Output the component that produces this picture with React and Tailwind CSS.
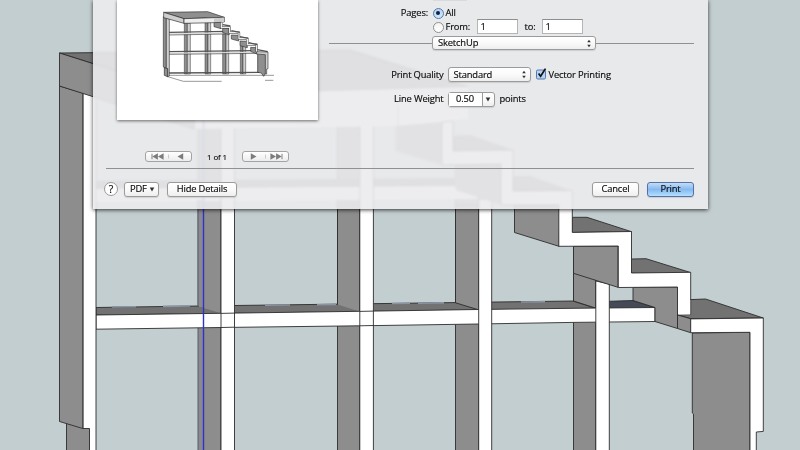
import React from 'react';

const DARK = '#8d8d8d';
const TOP = '#727272';

function Poly({ p, f = '#fff', s = '#2c2c2c', w = 0.9 }) {
  return <polygon points={p} fill={f} stroke={s} strokeWidth={w} />;
}

function Line({ d, s = '#2c2c2c', w = 0.9 }) {
  return <path d={d} fill="none" stroke={s} strokeWidth={w} />;
}

function ShelfModel() {
  return (
    <svg width="800" height="450" viewBox="0 0 800 450" className="block">
      {/* uprights, side faces */}
      <Poly p="198.5,110 221,110 221,460 198.5,460" f={DARK} s="none" />
      <rect x="197.4" y="110" width="1.6" height="350" fill="#6f7378" />
      <rect x="199" y="110" width="4" height="350" fill="#8a8892" />
      <Poly p="337.5,110 359.5,110 359.5,460 337.5,460" f={DARK} />
      <Poly p="455.5,165 478.5,165 478.5,460 455.5,460" f={DARK} />
      <Poly p="573.5,246 595.5,246 595.5,460 573.5,460" f={DARK} />

      {/* upper shelf */}
      <Poly p="96,181 455,178 478,186 96,189" f={TOP} s="none" />
      <Poly p="96,189 478,186 478,199 96,202" s="none" />

      {/* lower shelf */}
      <Poly p="96,307.5 198,306 573,301 595,308 654.5,307.5 220,313.5 96,315" f={TOP} />
      <Poly p="609,301.3 633,300.5 655,307.5 609,308" f="#454958" />
      <Line d="M112 306.9L136 306.7M163 306.4L190 306M265 305.2L290 305M317 304.7L336 304.5M392 303.5L410 303.3M418 303.2L444 302.9M521 302L545 301.7" s="#8a94a2" w={1.6} />
      <Poly p="203,211 221,211 221,313.3 203,307.8" f={DARK} s="none" />
      <Poly p="337.5,205 359.5,205 359.5,311.4 337.5,304.5" f={DARK} s="none" />
      <Poly p="455.5,205 478.5,205 478.5,309.8 455.5,302.8" f={DARK} />
      <Line d="M337.5 200V304.5M221 200V460M359.5 200V311" />
      <rect x="197.4" y="200" width="1.6" height="106" fill="#6f7378" />
      <rect x="199" y="200" width="4" height="107" fill="#8a8892" />
      <Poly p="573.5,260 595.5,260 595.5,308 573.5,301" f={DARK} />
      <Poly p="96,315 221,313.3 360,311.3 478,309.5 573,308.3 655,307.5 655,321.5 573,322.4 478,324 360,325.8 221,327.5 96,329.2" />

      {/* uprights, front edges */}
      <Poly p="221,125 234.5,125 234.5,460 221,460" />
      <Poly p="359.8,125 373.4,125 373.4,460 359.8,460" />
      <Line d="M221 313.4L234.5 313.1M221 327.5L234.5 327.2M359.8 311.4L373.4 311.1M359.8 325.8L373.4 325.5" />
      <Poly p="478.7,199 491.7,199 491.7,460 478.7,460" />
      <Poly p="595.8,281 609.3,284 609.3,460 595.8,460" />

      {/* left side panel */}
      <Poly p="66.5,420 89.5,428 89.5,460 66.5,460" f={DARK} />
      <Poly p="83,90 96,94 96,460 89.5,460 89.5,428.5 83,428.5" />
      <Poly p="59.5,86 82.8,93 82.8,428.5 59.5,421.5" f={DARK} />

      {/* slab */}
      <Poly p="59.5,53 350,50 468,87 195,96" f={TOP} />
      <Poly p="59.5,53 195,96 195,129 59.5,86" f={DARK} />
      <Poly p="195,95 468,87 468,119 398,126 195,129" s="none" />
      <Line d="M398 105V126" s="#888" />

      {/* stairs */}
      <Poly p="395.5,126 442,122 442,165 395.5,151" f={DARK} s="none" />
      <Poly p="453,136 470,135 513,150 453,151" f={TOP} s="none" />
      <Poly p="455.5,164 501,164 501,205 455.5,190" f={DARK} s="none" />
      <Poly p="513,176 530,176 572,191 513,191" f={TOP} s="none" />
      <Poly p="514.5,205 560,205 559,246.3 514.5,232.5" f={DARK} />
      <Poly p="572.5,217.3 587,217.3 631.5,231.7 572.5,232.5" f={TOP} />
      <Poly p="573.5,246.3 618,246 618,287.3 573.5,273.3" f={DARK} />
      <Poly p="631.5,259 646,258.7 690.5,272.5 631.5,273.3" f={TOP} />
      <Poly p="633,287.4 677.5,287 677.5,328.5 655,321.5 655,307.5 633,300.5" f={DARK} />
      <Poly p="442,122 453,121 453,151 513,150 513,191 572.3,190.5 572.3,232.4 631.5,231.5 631.5,273 690.7,272.3 690.7,318 677.5,315 677.5,287 618.3,287.5 618.3,246 558.8,246.3 558.8,205 501,205 501,164 442,165" />
      <Poly p="690.7,299.6 705.5,299 763.3,318 690.7,318.7 677.5,315 690.7,314.5" f={TOP} />
      <rect x="678" y="300" width="12.3" height="14.5" fill="#fff" />
      <Poly p="677.5,315 690.7,318.7 690.7,332.7 677.5,328.5" f={DARK} />
      <Poly p="692.3,333 750,332.3 750,460 693.5,460 693.5,414 692.3,413" f={DARK} />
      <Poly p="690.7,318.9 763.3,318 763.3,431.4 756.3,432 756.3,460 750,460 750,332.3 690.7,332.7" />
      <rect x="202.8" y="120" width="1.4" height="340" fill="#2f33c4" />
    </svg>
  );
}

function PreviewDrawing() {
  const g = '#8f8f8f';
  const l = '#cfcfcf';
  return (
    <svg width="140" height="90" viewBox="0 0 420 270" className="block">
      <g strokeLinejoin="round">
        <Poly p="103,67 112,70 112,222 103,222" f={g} w={1.5} />
        <Poly p="112,70 121,70 121,222 112,222" f={l} w={1.5} />
        <Poly p="165,67 174,67 174,222 165,222" f={g} w={1.5} />
        <Poly p="174,67 182,67 182,222 174,222" f={l} w={1.5} />
        <Poly p="218,100 228,104 228,222 218,222" f={g} w={1.5} />
        <Poly p="228,104 236,104 236,222 228,222" f={l} w={1.5} />
        <Poly p="271,137 279,137 279,222 271,222" f={g} w={1.5} />
        <Poly p="279,137 287,137 287,222 279,222" f={l} w={1.5} />
        <Line d="M57 97L230 94M57 155L315 152" s="#555" w={4} />
        <Line d="M57 102L228 99M57 160L322 157" s="#ddd" w={4} />
        <Line d="M57 105L227 102M57 163L324 160" s="#444" w={2} />
        <Line d="M57 219L328 217" s="#555" w={4} />
        <Line d="M57 226H372M50 229L100 244H215M345 241H370" s="#666" w={2} />
        <Poly p="40,50 49,54 49,206 40,201" f={g} w={1.8} />
        <Poly p="49,54 58,57 58,228 53,230 53,206 49,206" f={l} w={1.8} />
        <Poly p="43,203 53,206 53,230 43,226" f={g} w={2} />
        <Poly p="41,37 173,35 223,52 102,56" f={g} w={2} />
        <Poly p="41,37 102,56 102,70 41,53" f={l} w={2} />
        <Poly p="102,56 223,52 223,66 192,68 102,70" f="#eee" w={2} />
        <path d="M192 55L222 53V66L192 68Z" fill="#ccc" />
        <Poly p="192,68 213,67 213,86 192,80" f={g} w={1.8} />
        <Poly p="218,84 238,85 238,104 218,98" f={g} w={1.8} />
        <Poly p="244,105 266,106 266,123 244,117" f={g} w={1.8} />
        <Poly p="270,123 292,124 292,143 270,137" f={g} w={1.8} />
        <Poly p="302,142 320,143 320,162 302,154" f={g} w={1.8} />
        <path d="M214 68V82H239V98H267V116H292V134H320V156" fill="none" stroke="#444" strokeWidth="7" />
        <path d="M214 68V82H239V98H267V116H292V134H320V156" fill="none" stroke="#eee" strokeWidth="4" />
        <path d="M218 74L241 78M244 92L269 97M270 110L295 115M296 128L321 134M322 149L353 155" stroke="#555" strokeWidth="4" />
        <Poly p="323,160 347,162 347,219 341,229 334,219 323,217" f={g} w={2} />
        <Poly p="320,155 354,156 354,206 350,207 350,222 346,222 346,164 320,162" f={l} w={1.8} />
      </g>
    </svg>
  );
}

function UpDown() {
  return (
    <svg width="6" height="9" viewBox="0 0 6 9" className="block shrink-0">
      <path d="M3 0.7L4.8 3.3H1.2ZM3 8.3L4.8 5.7H1.2Z" fill="#333" />
    </svg>
  );
}

function Down() {
  return (
    <svg width="6" height="5" viewBox="0 0 6 5" className="block shrink-0">
      <path d="M0.7 0.4H5.3L3 4.4Z" fill="#333" />
    </svg>
  );
}

const control =
  'box-border flex items-center rounded-[3px] border border-[#9b9b9b] bg-linear-to-b from-white via-[#fafafa] to-[#eeeeee] shadow-[0_1px_1px_rgba(0,0,0,0.12)]';

function PageButtons({ forward }) {
  return (
    <div className="flex h-[11px] w-[47px] items-center rounded-[3px] border border-[#a3a3a3] bg-linear-to-b from-white to-[#ededed]">
      <svg width="45" height="9" viewBox="0 0 45 9" className={forward ? 'block -scale-x-100' : 'block'}>
        <path d="M6 1.8V7.2" stroke="#808080" strokeWidth="1" />
        <path d="M11.9 1.3V7.7L6.3 4.5ZM17.6 1.3V7.7L12 4.5ZM37.2 1.3V7.7L31.5 4.5Z" fill="#7c7c7c" />
        <path d="M22.5 2.5V6.5" stroke="#ccc" strokeWidth="1" />
      </svg>
    </div>
  );
}

function PrintDialog() {
  return (
    <div className="absolute top-0 left-[93px] flex h-[209px] w-[615px] flex-col bg-[#ebebed]/[.905] shadow-[0_1px_4px_rgba(0,0,0,0.75)] backdrop-blur-[0.8px]">
      <div className="flex h-[168px]">
        <div className="flex w-[236px] flex-col pl-6">
          <div className="h-[120px] w-[201px] bg-white pl-[33px] shadow-[0_1px_3px_rgba(0,0,0,0.55)]">
            <PreviewDrawing />
          </div>
          <div className="mt-[31px] ml-7 flex h-[11px] w-[144px] items-center justify-between text-[8px]">
            <PageButtons />
            <span>1 of 1</span>
            <PageButtons forward />
          </div>
        </div>
        <div className="flex w-[365px] flex-col">
          <div className="ml-[104px] h-px w-[34px] bg-[#d9dadb]" />
          <div className="mt-[5px] flex h-[14px] items-center">
            <span className="w-[99px] text-right">Pages:</span>
            <span className="ml-[4.5px] flex size-[11px] items-center justify-center rounded-full border border-[#5676a5] bg-linear-to-b from-[#b6d4f4] to-[#cdeaff]">
              <span className="size-[4px] rounded-full bg-[#14203a]" />
            </span>
            <span className="ml-[2px]">All</span>
          </div>
          <div className="-mt-[1px] flex h-[15px] items-center">
            <span className="mt-[1px] ml-[103.5px] size-[11px] rounded-full border border-[#8f8f8f] bg-linear-to-b from-[#f4f4f4] to-white" />
            <span className="mt-[1px] ml-[2px] w-[31px]">From:</span>
            <span className="flex h-[15px] w-[41px] items-center border border-[#b5b5b5] border-t-[#8e8e8e] bg-white pl-[3px]">1</span>
            <span className="w-[24px] pl-[7px]">to:</span>
            <span className="flex h-[15px] w-[41px] items-center border border-[#b5b5b5] border-t-[#8e8e8e] bg-white pl-[3px]">1</span>
          </div>
          <div className="mt-[1.5px] flex h-[15px] items-center">
            <span className="h-px w-[103px] bg-[#8f9091]" />
            <span className={`${control} h-[14.5px] w-[164px] justify-between pr-[3px] pl-[5px]`}>
              SketchUp
              <UpDown />
            </span>
            <span className="h-px flex-1 bg-[#8f9091]" />
          </div>
          <div className="mt-[16.5px] flex h-[15px] items-center">
            <span className="w-[114.5px] text-right">Print Quality</span>
            <span className={`${control} ml-[4px] h-[15px] w-[83px] justify-between pr-[3px] pl-[5px]`}>
              Standard
              <UpDown />
            </span>
            <svg width="13" height="13" viewBox="0 0 13 13" className="-mt-[2px] ml-[4px] block">
              <rect x="1.5" y="3" width="9" height="9" rx="1.2" fill="#b4d4f5" stroke="#5879aa" />
              <path d="M3.6 6.5L5.6 9.3L10.5 1.6" fill="none" stroke="#111" strokeWidth="1.7" />
            </svg>
            <span className="ml-[1px]">Vector Printing</span>
          </div>
          <div className="mt-[9.5px] flex h-[15px] items-center">
            <span className="w-[114.5px] text-right">Line Weight</span>
            <span className={`${control} ml-[4px] h-[15px] w-[47px]`}>
              <span className="flex h-full w-[34px] items-center justify-center border-r border-[#9b9b9b] bg-white">0.50</span>
              <span className="flex flex-1 justify-center">
                <Down />
              </span>
            </span>
            <span className="ml-[5px]">points</span>
          </div>
        </div>
      </div>
      <div className="ml-[13px] h-px w-[588px] shrink-0 bg-[#8f9091]" />
      <div className="mt-[12.5px] flex h-[15px] items-center pr-[14px] pl-[11px]">
        <span className="flex size-[14px] items-center justify-center rounded-full border border-[#999] bg-white text-[10.5px]">?</span>
        <span className={`${control} ml-[6px] h-[15px] w-[35px] justify-between pr-[3px] pl-[5px]`}>
          PDF
          <Down />
        </span>
        <span className={`${control} ml-[8px] h-[15px] w-[70px] justify-center`}>Hide Details</span>
        <span className="flex-1" />
        <span className={`${control} h-[15px] w-[47px] justify-center`}>Cancel</span>
        <span className="ml-[8px] flex h-[15px] w-[47px] items-center justify-center rounded-[3px] border border-[#5670a8] bg-linear-to-b from-[#c3dcf6] via-[#85b9f0] to-[#b4e0ff] shadow-[0_1px_1px_rgba(0,0,0,0.12)]">
          Print
        </span>
      </div>
    </div>
  );
}

export default function App() {
  return (
    <div className="relative h-[450px] w-[800px] overflow-hidden bg-[#c3ced0] font-['Open_Sans','Noto_Sans',sans-serif] text-[9.4px] leading-none font-medium tracking-[-0.16px] whitespace-nowrap text-[#0c0c0c] [-webkit-text-stroke:0.15px_#0c0c0c]">
      <ShelfModel />
      <PrintDialog />
    </div>
  );
}
